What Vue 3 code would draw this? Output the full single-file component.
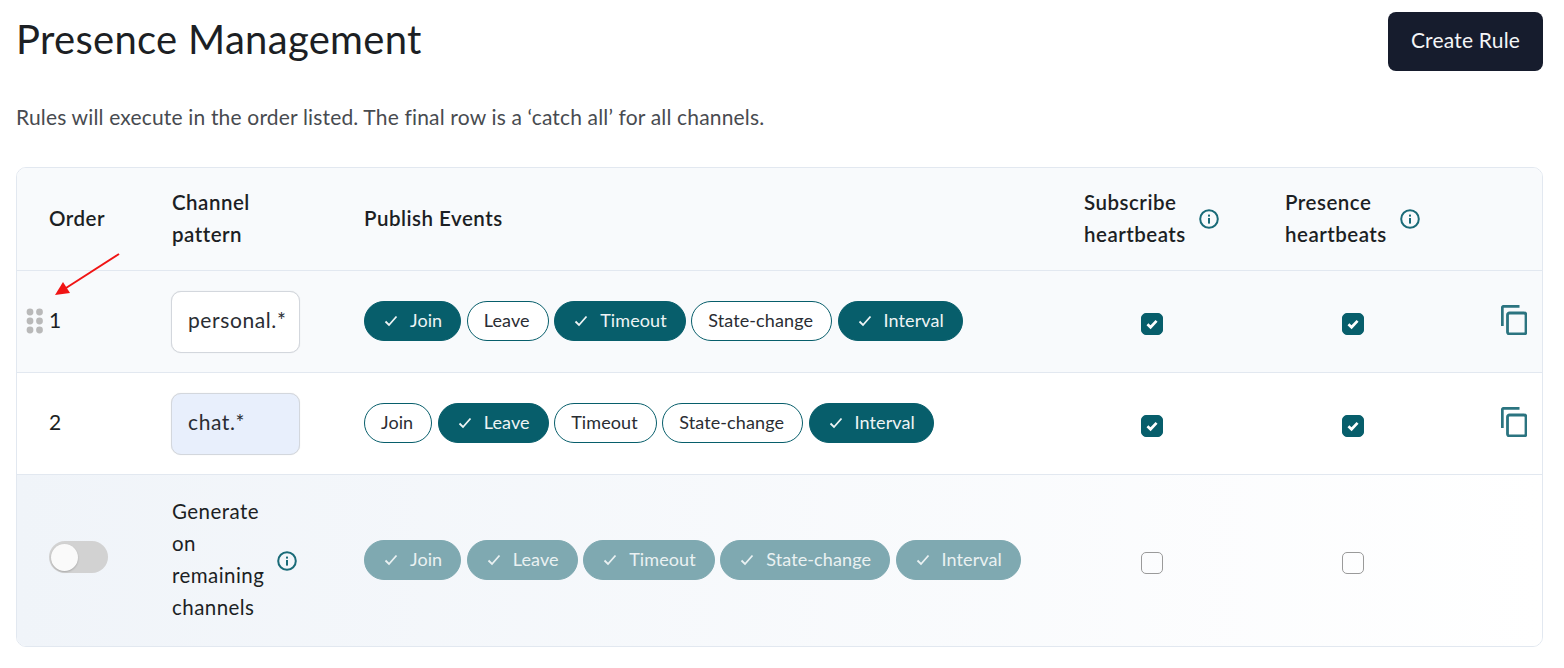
<script setup>
const rows = [
  { n: '1', value: 'personal.*', cls: 'row-alt', input: '', handle: true, events: [true, false, true, false, true] },
  { n: '2', value: 'chat.*', cls: '', input: 'filled', handle: false, events: [false, true, false, false, true] },
]
const names = ['Join', 'Leave', 'Timeout', 'State-change', 'Interval']
</script>

<template>
  <div class="page">
    <header class="top">
      <h1>Presence Management</h1>
      <button class="create"><span>Create Rule</span></button>
    </header>
    <p class="lead">Rules will execute in the order listed. The final row is a ‘catch all’ for all channels.</p>

    <div class="table">
      <div class="row head">
        <div>Order</div>
        <div>Channel<br />pattern</div>
        <div>Publish Events</div>
        <div class="with-info"><span>Subscribe<br />heartbeats</span>
          <svg class="info" viewBox="0 0 20 20"><circle cx="10" cy="10" r="8.8" /><rect x="9" y="9" width="2" height="5.6" /><rect x="9" y="5.6" width="2" height="2" /></svg>
        </div>
        <div class="with-info"><span>Presence<br />heartbeats</span>
          <svg class="info" viewBox="0 0 20 20"><circle cx="10" cy="10" r="8.8" /><rect x="9" y="9" width="2" height="5.6" /><rect x="9" y="5.6" width="2" height="2" /></svg>
        </div>
        <div></div>
      </div>

      <div v-for="r in rows" :key="r.n" class="row body" :class="r.cls">
        <div class="order">
          <svg v-if="r.handle" class="grip" viewBox="0 0 18 26"><g fill="#b9b9b9"><circle cx="4" cy="4" r="3.4" /><circle cx="13.5" cy="4" r="3.4" /><circle cx="4" cy="13" r="3.4" /><circle cx="13.5" cy="13" r="3.4" /><circle cx="4" cy="22" r="3.4" /><circle cx="13.5" cy="22" r="3.4" /></g></svg>
          {{ r.n }}
        </div>
        <div><div class="field" :class="r.input">{{ r.value }}</div></div>
        <div class="pills">
          <span v-for="(name, i) in names" :key="name" class="pill" :class="{ on: r.events[i] }">
            <svg v-if="r.events[i]" class="tick" viewBox="0 0 14 12"><path d="M1.5 6.5 5 10 12.5 1.5" /></svg>
            {{ name }}
          </span>
        </div>
        <div class="center"><span class="box on"><svg viewBox="0 0 22 22"><path d="M6 11.4 9.4 14.6 16 7.6" /></svg></span></div>
        <div class="center"><span class="box on"><svg viewBox="0 0 22 22"><path d="M6 11.4 9.4 14.6 16 7.6" /></svg></span></div>
        <div class="copy-cell">
          <svg class="copy" viewBox="0 0 26 30"><path d="M18.5 1.3H2.8A1.5 1.5 0 0 0 1.3 2.8V21" /><rect x="6.5" y="8" width="18.5" height="21" rx="2" /></svg>
        </div>
      </div>

      <div class="row body last">
        <div><span class="toggle"><span class="knob"></span></span></div>
        <div class="with-info gen"><span>Generate<br />on<br />remaining<br />channels</span>
          <svg class="info" viewBox="0 0 20 20"><circle cx="10" cy="10" r="8.8" /><rect x="9" y="9" width="2" height="5.6" /><rect x="9" y="5.6" width="2" height="2" /></svg>
        </div>
        <div class="pills">
          <span v-for="name in names" :key="name" class="pill on faded">
            <svg class="tick" viewBox="0 0 14 12"><path d="M1.5 6.5 5 10 12.5 1.5" /></svg>
            {{ name }}
          </span>
        </div>
        <div class="center"><span class="box"></span></div>
        <div class="center"><span class="box"></span></div>
        <div></div>
      </div>

      <svg class="arrow" viewBox="0 0 70 46"><path d="M65 1 12 35" stroke="#f01414" stroke-width="2" fill="none" /><path d="M1 42 9 29 16 40Z" fill="#f01414" /></svg>
    </div>
  </div>
</template>

<style scoped>
.page {
  width: 1564px;
  box-sizing: border-box;
  padding: 12px 21px 0 16px;
  font-family: Lato, "Open Sans", sans-serif;
  color: #1c1f24;
}
.top {
  display: flex;
  justify-content: space-between;
  align-items: flex-start;
}
h1 {
  margin: -1px 0 1px;
  font-size: 40px;
  line-height: 56px;
  font-weight: 400;
  letter-spacing: 0.3px;
}
.create {
  width: 155px;
  height: 59px;
  border: 0;
  border-radius: 8px;
  background: #161c2d;
  color: #f4f5f7;
  font: 400 21px Lato, sans-serif;
  letter-spacing: 0.2px;
  padding: 0 0 5px;
}
.lead {
  margin: 31px 0 0;
  font-size: 21px;
  line-height: 30px;
  color: #484b50;
  letter-spacing: 0.17px;
}
.table {
  position: relative;
  margin-top: 35px;
  border: 1px solid #e2e8f0;
  border-radius: 10px;
  overflow: hidden;
  font-size: 20.5px;
}
.row {
  display: grid;
  grid-template-columns: 155px 192px 720px 201px 215px 1fr;
  align-items: center;
  border-bottom: 1px solid #e2e8f0;
}
.row > div:first-child {
  padding-left: 32px;
}
.head {
  height: 102px;
  background: #f8fafc;
  font-weight: 600;
  line-height: 32px;
  letter-spacing: 0.5px;
  color: #1c1f24;
}
.head > div {
  margin-bottom: 3px;
}
.head .info {
  margin-top: 3px;
}
.body {
  height: 101px;
  letter-spacing: 0.2px;
}
.row-alt {
  background: #f8fafc;
}
.order {
  position: relative;
  margin-bottom: 5px;
  font-size: 21px;
}
.grip {
  position: absolute;
  left: 9px;
  top: 1px;
  width: 18px;
  height: 26px;
}
.with-info {
  display: flex;
  align-items: center;
  gap: 13px;
}
.info {
  width: 20px;
  height: 20px;
  flex: none;
}
.info circle {
  fill: none;
  stroke: #1a6b78;
  stroke-width: 2;
}
.info rect {
  fill: #1a6b78;
}
.field {
  box-sizing: border-box;
  width: 129px;
  height: 62px;
  margin-left: -1px;
  padding: 0 0 5px 16px;
  display: flex;
  align-items: center;
  overflow: hidden;
  white-space: nowrap;
  border: 1px solid #d3d7dd;
  border-radius: 10px;
  background: #fff;
  box-shadow: 0 0 1px rgba(0, 0, 0, 0.15);
  font-size: 21px;
  letter-spacing: 0.6px;
  color: #2a2d33;
}
.field.filled {
  background: #e8effc;
}
.pills {
  display: flex;
  gap: 5.5px;
  margin-bottom: 2px;
}
.pill {
  box-sizing: border-box;
  height: 40px;
  padding: 0 18px 2px 16px;
  display: inline-flex;
  align-items: center;
  gap: 12px;
  border: 1px solid #075e6b;
  border-radius: 20px;
  font-size: 18px;
  letter-spacing: 0.1px;
  color: #2a2d33;
  background: #fff;
}
.pill.on {
  background: #075e6b;
  color: #eef4f5;
  padding: 0 18px 2px 19px;
}
.pill.faded {
  background: #7fa9b1;
  border-color: #7fa9b1;
  color: #eaf1f2;
}
.tick {
  width: 14px;
  height: 12px;
  fill: none;
  stroke: currentColor;
  stroke-width: 1.8;
  margin-top: 2px;
}
.center {
  display: flex;
  padding-left: 57px;
  padding-top: 5px;
}
.box {
  box-sizing: border-box;
  width: 22px;
  height: 22px;
  border: 1px solid #9a9a9a;
  border-radius: 5px;
  display: block;
}
.box.on {
  background: #075e6b;
  border-color: #075e6b;
}
.box svg {
  display: block;
  width: 20px;
  height: 20px;
  fill: none;
  stroke: #fff;
  stroke-width: 3;
}
.copy-cell {
  display: flex;
  margin-bottom: 3px;
  padding-left: 1px;
}
.copy {
  width: 26px;
  height: 30px;
  fill: none;
  stroke: #2b7480;
  stroke-width: 2.8;
}
.last {
  height: 171px;
  border-bottom: 0;
  line-height: 32px;
  background: linear-gradient(90deg, #f0f4f9 0%, #ffffff 100%);
}
.gen span {
  margin-bottom: 3px;
  letter-spacing: 0.45px;
}
.last > div:first-child {
  margin-bottom: 8px;
}
.toggle {
  display: block;
  position: relative;
  width: 59px;
  height: 32px;
  border-radius: 16px;
  background: #d2d2d2;
}
.knob {
  position: absolute;
  left: 2px;
  top: 3px;
  width: 27px;
  height: 27px;
  border-radius: 50%;
  background: #fafafa;
  box-shadow: 0 1px 2px rgba(0, 0, 0, 0.2);
}
.arrow {
  position: absolute;
  left: 37px;
  top: 85px;
  width: 70px;
  height: 46px;
}
</style>
